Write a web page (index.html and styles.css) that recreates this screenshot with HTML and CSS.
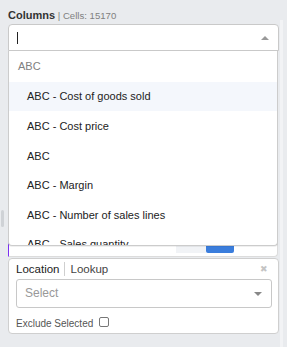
FILE: index.html
```html
<!DOCTYPE html>
<html>
<head>
<meta charset="utf-8">
<link rel="stylesheet" href="styles.css">
</head>
<body>
<div class="layout">
  <div class="gutter"><div class="thumb"></div></div>
  <div class="content">
    <div class="label"><span class="label-main">Columns</span><span class="label-sub"> | Cells: 15170</span></div>
    <div class="select-wrap">
      <div class="select open">
        <span class="cursor"></span>
        <span class="caret-up"></span>
      </div>
      <div class="menu">
        <div class="menu-group">ABC</div>
        <div class="menu-option focused">ABC - Cost of goods sold</div>
        <div class="menu-option">ABC - Cost price</div>
        <div class="menu-option">ABC</div>
        <div class="menu-option">ABC - Margin</div>
        <div class="menu-option">ABC - Number of sales lines</div>
        <div class="menu-option">ABC - Sales quantity</div>
        <div class="menu-option">ABC - Sales value</div>
      </div>
    </div>
    <div class="columns-body">
      <div class="toolbar">
        <span class="btn-light"></span>
        <span class="btn-primary"></span>
      </div>
    </div>
    <div class="card">
      <div class="card-head">
        <span class="tab active">Location</span>
        <span class="tab">Lookup</span>
        <span class="close">&#x2716;</span>
      </div>
      <div class="select2">
        <span class="placeholder">Select</span>
        <span class="caret-down"></span>
      </div>
      <label class="exclude">Exclude Selected <span class="checkbox"></span></label>
    </div>
  </div>
  <div class="track"></div>
</div>
</body>
</html>
```
FILE: styles.css
```css
* { box-sizing: border-box; }
html, body { margin: 0; padding: 0; }
body {
  background: #e9ebee;
  font-family: "Liberation Sans", Arial, sans-serif;
  color: #333;
  width: 287px;
  height: 347px;
  overflow: hidden;
}
.layout { display: flex; align-items: flex-start; }
.gutter { width: 8px; flex: none; }
.thumb {
  margin-top: 210px;
  margin-left: 1px;
  width: 3px;
  height: 17px;
  border-radius: 2px;
  background: #cfd2d6;
}
.content { width: 271px; flex: none; padding-top: 7px; }
.track {
  width: 3px;
  height: 327px;
  margin-top: 20px;
  margin-left: 1px;
  background: #f2f3f5;
  flex: none;
}
.label { height: 14px; line-height: 14px; margin-bottom: 3px; white-space: nowrap; }
.label-main { font-size: 11px; font-weight: bold; color: #333; }
.label-sub { font-size: 9.6px; color: #808080; }

.select-wrap { position: relative; }
.select {
  height: 27px;
  background: #fff;
  border: 1px solid #c9c9c9;
  border-radius: 4px 4px 0 0;
  display: flex;
  align-items: center;
  padding: 0 9px 0 8px;
  justify-content: space-between;
}
.cursor { width: 1px; height: 12px; background: #222; margin-top: 1px; }
.caret-up {
  width: 0; height: 0;
  border-style: solid;
  border-width: 0 4px 4px;
  border-color: transparent transparent #999;
}
.menu {
  position: absolute;
  left: 0;
  top: 100%;
  width: 270px;
  height: 195px;
  overflow: hidden;
  background: #fff;
  border: 1px solid #ccc;
  border-top: none;
  border-radius: 0 0 4px 4px;
  z-index: 5;
  box-shadow: 0 1px 0 rgba(0,0,0,0.06);
}
.menu-group {
  height: 30.7px;
  display: flex;
  align-items: center;
  padding-left: 9px;
  font-size: 11px;
  color: #808080;
}
.menu-option {
  height: 29.6px;
  display: flex;
  align-items: center;
  padding-left: 18px;
  font-size: 11px;
  color: #222;
  white-space: nowrap;
}
.menu-option.focused { background: #f4f7fc; }

.columns-body {
  height: 206px;
  background: #fff;
  border-left: 1px solid #7b2ff2;
  border-bottom: 1px solid #dcdcdc;
  border-right: 1px solid #dcdcdc;
  border-radius: 0 0 4px 0;
  width: 270px;
  margin-bottom: 1px;
  display: flex;
  align-items: flex-end;
  justify-content: flex-end;
  padding: 0 43px 3px 0;
}
.toolbar { display: flex; }
.btn-light { width: 30px; height: 20px; background: #f1f3f6; }
.btn-primary { width: 28px; height: 20px; background: #3a7ddc; border-radius: 0 0 2px 2px; }

.card {
  background: #fff;
  border: 1px solid #cfcfcf;
  border-radius: 4px;
  padding: 2px 6px 4px 7px;
}
.card-head {
  display: flex;
  align-items: center;
  height: 16px;
  font-size: 11.5px;
}
.tab { line-height: 14px; color: #222; white-space: nowrap; }
.tab.active { padding-right: 5px; border-right: 1px solid #cfcfcf; }
.tab + .tab { padding-left: 5px; color: #444; }
.close { margin-left: auto; margin-right: 4px; font-size: 9px; line-height: 14px; color: #c4c4c4; }
.select2 {
  margin-top: 2px;
  height: 29px;
  border: 1px solid #c8c8c8;
  border-radius: 3px;
  display: flex;
  align-items: center;
  justify-content: space-between;
  padding: 0 9px 0 8px;
}
.placeholder { font-size: 12px; color: #999; margin-top: -2px; }
.caret-down {
  width: 0; height: 0;
  border-style: solid;
  border-width: 4px 4px 0;
  border-color: #888 transparent transparent;
}
.exclude {
  display: flex;
  align-items: center;
  margin-top: 9px;
  height: 12px;
  font-size: 10px;
  color: #555;
  white-space: pre;
}
.checkbox {
  display: inline-block;
  width: 10px;
  height: 10px;
  border: 1px solid #777;
  border-radius: 2px;
  margin-left: 3px;
  margin-top: -3px;
}
```
